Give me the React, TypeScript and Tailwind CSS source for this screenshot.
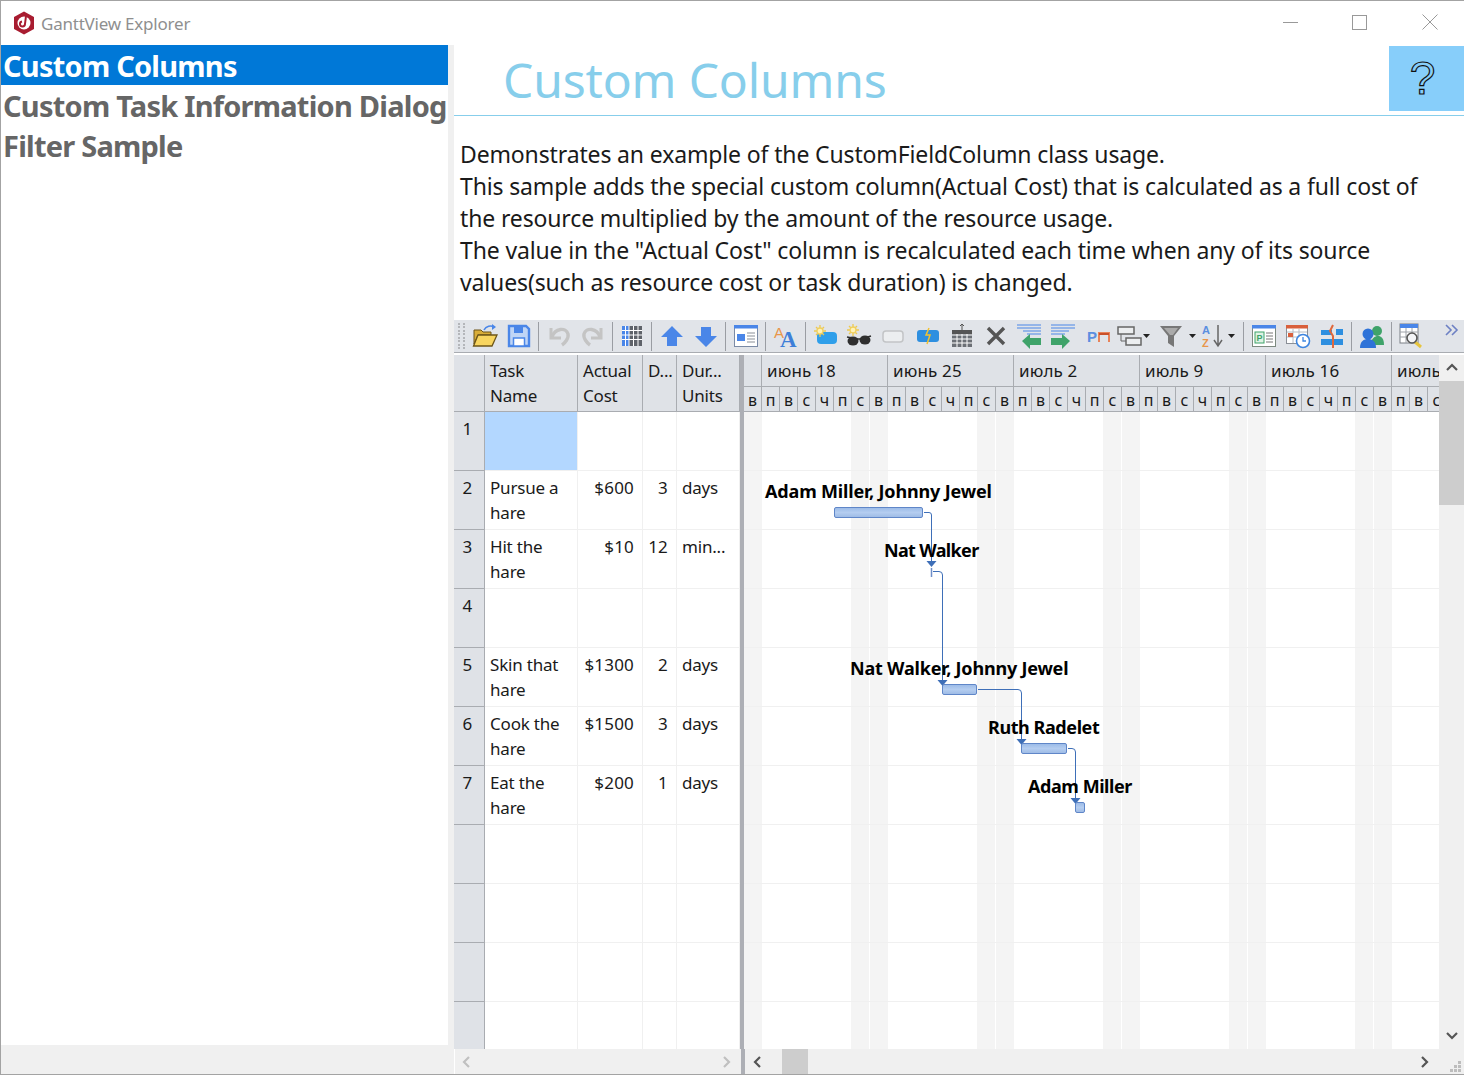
import React from "react";

const Svg = ({ children, w = 26 }: { children: React.ReactNode; w?: number }) => (
  <svg width={w} height={26} viewBox={`0 0 ${w} 26`} className="block shrink-0">{children}</svg>
);
const Btn = ({ children }: { children: React.ReactNode }) => (
  <div className="flex w-[34px] shrink-0 items-center justify-center">{children}</div>
);
const Sep = () => <div className="h-[29px] w-px shrink-0 bg-[#9a9da3]" />;
const Drop = () => (
  <svg width={8} height={5} viewBox="0 0 8 5" className="block shrink-0"><path d="M0 0h7L3.500 4z" fill="#222" /></svg>
);
const Sun = ({ x = 8, y = 8 }: { x?: number; y?: number }) => (
  <g stroke="#eec950" strokeWidth={1.3}>
    <path d={`M${x - 6} ${y}h12M${x} ${y - 6}v12M${x - 4} ${y - 4}l8 8M${x - 4} ${y + 4}l8-8`} />
    <circle cx={x} cy={y} r={3} fill="#fff3b8" stroke="#f0cf60" />
  </g>
);

const Toolbar = () => (
  <div className="flex h-[32px] items-center bg-[#e1e4e9]">
    <div className="ml-1 grid h-[26px] w-[8px] shrink-0 grid-cols-2 content-between gap-x-[2px]">
      {Array.from({ length: 16 }).map((_, i) => (
        <div key={i} className="h-[2px] w-[2px] bg-[#b4b6ba]" />
      ))}
    </div>
    <div className="flex w-[72px] shrink-0 justify-end pr-[2px]">
      <Btn>
        <Svg>
          <path d="M2 7h7l2 2h8v3H6L2 21z" fill="#d9ad38" stroke="#6d5518" />
          <path d="M6 12h19l-5 11H1.500z" fill="#f8d55f" stroke="#6d5518" strokeWidth={1.3} />
          <path d="M12 7c2-4 7-5 10-3" fill="none" stroke="#4a86e8" strokeWidth={1.6} />
          <path d="M20 1l4 3-4 3z" fill="#4a86e8" />
        </Svg>
      </Btn>
      <Btn>
        <Svg>
          <path d="M3 3h17l3 3v17H3z" fill="#bfd5f6" stroke="#4a86e8" strokeWidth={2.4} />
          <rect x="8" y="3" width="9" height="7" fill="#4a86e8" />
          <rect x="7.500" y="15" width="11" height="8" fill="#fff" stroke="#4a86e8" strokeWidth={1.5} />
        </Svg>
      </Btn>
    </div>
    <Sep />
    <div className="flex w-[73px] shrink-0 justify-center">
      <Btn>
        <Svg>
          <path d="M5 5v10h10" fill="none" stroke="#c4c4c4" strokeWidth={3} />
          <path d="M6 14C9 5 20 4 22 11c1 4-3 9-6 11" fill="none" stroke="#c4c4c4" strokeWidth={3.4} />
        </Svg>
      </Btn>
      <Btn>
        <Svg>
          <path d="M21 5v10H11" fill="none" stroke="#c4c4c4" strokeWidth={3} />
          <path d="M20 14C17 5 6 4 4 11c-1 4 3 9 6 11" fill="none" stroke="#c4c4c4" strokeWidth={3.4} />
        </Svg>
      </Btn>
    </div>
    <Sep />
    <div className="flex w-[38px] shrink-0 justify-center">
      <Svg>
        <rect x="3" y="3" width="20" height="20" fill="#5f636a" />
        <rect x="3" y="3" width="7" height="20" fill="#4a86e8" />
        <path d="M3 7.500h20M3 12h20M3 16.500h20M6.500 3v20M10 3v20M14.500 3v20M19 3v20" stroke="#fff" strokeWidth={1} />
      </Svg>
    </div>
    <Sep />
    <div className="flex w-[73px] shrink-0 justify-center">
      <Btn>
        <Svg><path d="M2 14L13 3l11 11h-6v9H8v-9z" fill="#4a86e8" /></Svg>
      </Btn>
      <Btn>
        <Svg><path d="M2 13L13 24l11-11h-6V4H8v9z" fill="#4a86e8" /></Svg>
      </Btn>
    </div>
    <Sep />
    <div className="flex w-[39px] shrink-0 justify-center">
      <Svg>
        <rect x="1.500" y="3.500" width="23" height="20" fill="#fff" stroke="#7a8aa5" />
        <rect x="1" y="2" width="24" height="3.500" fill="#4a86e8" />
        <rect x="4" y="11" width="8" height="7" fill="#4a86e8" />
        <path d="M14 10h8M14 13h8M14 16h8M14 19h8" stroke="#8a8f97" />
      </Svg>
    </div>
    <Sep />
    <div className="flex w-[39px] shrink-0 justify-center">
      <Svg>
        <text x="1" y="15" fontSize="15" fill="#e8964a" fontFamily="Liberation Sans, sans-serif">A</text>
        <text x="7" y="24" fontSize="23" fontWeight="700" fill="#3e7fd8" fontFamily="Liberation Serif, serif">A</text>
      </Svg>
    </div>
    <Sep />
    <div className="flex w-[437px] shrink-0 pl-[2px]">
      <Btn>
        <Svg>
          <rect x="5" y="9" width="20" height="12" rx="4" fill="#2f9fea" />
          <Sun x={8} y={8} />
        </Svg>
      </Btn>
      <Btn>
        <Svg>
          <Sun x={7} y={7} />
          <path d="M1 14l11 2h3l10-3" fill="none" stroke="#2f2f2f" strokeWidth={1.6} />
          <ellipse cx="7" cy="18" rx="5.500" ry="4.500" fill="#2f2f2f" />
          <ellipse cx="19" cy="17" rx="5.500" ry="4.500" fill="#2f2f2f" />
        </Svg>
      </Btn>
      <Btn>
        <Svg><rect x="3" y="8" width="20" height="11" rx="3" fill="#eceef0" stroke="#c2c4c6" strokeWidth={1.5} /></Svg>
      </Btn>
      <Btn>
        <Svg>
          <rect x="3" y="7" width="22" height="12" rx="3" fill="#2e8fe0" />
          <path d="M15 5l-3 7h4l-3 9" fill="none" stroke="#f2c230" strokeWidth={1.5} />
        </Svg>
      </Btn>
      <Btn>
        <Svg>
          <rect x="4" y="7" width="20" height="17" fill="#6c7076" />
          <path d="M4 12h20M4 16h20M4 20h20M9 7v17M14 7v17M19 7v17" stroke="#fff" />
          <rect x="4" y="7" width="20" height="4" fill="#555" />
          <path d="M14 7V1M12 3l2-2 2 2" fill="none" stroke="#555" />
        </Svg>
      </Btn>
      <Btn>
        <Svg><path d="M6 5l16 16M22 5L6 21" stroke="#555" strokeWidth={3.4} /></Svg>
      </Btn>
      <Btn>
        <Svg>
          <path d="M1 2h24M1 5h24M7 8h18M11 11h14" stroke="#4a86e8" strokeWidth={1.2} />
          <path d="M6 18l8-7v4h11v7H14v4z" fill="#3fa36a" />
        </Svg>
      </Btn>
      <Btn>
        <Svg>
          <path d="M1 2h24M1 5h24M1 8h18M1 11h14" stroke="#4a86e8" strokeWidth={1.2} />
          <path d="M20 18l-8-7v4H1v7h11v4z" fill="#3fa36a" />
        </Svg>
      </Btn>
      <Btn>
        <Svg>
          <text x="3" y="19" fontSize="15" fontWeight="700" fill="#5b8fe0" fontFamily="Liberation Sans, sans-serif">P</text>
          <path d="M15 19v-9h10v9" fill="none" stroke="#e8835a" strokeWidth={2} />
          <path d="M15 11h10" stroke="#c9502a" strokeWidth={2} />
        </Svg>
      </Btn>
      <div className="flex w-[41px] shrink-0 items-center pl-[3px]">
        <Svg w={25}>
          <rect x="1" y="4" width="16" height="7" fill="#eceef0" stroke="#666" strokeWidth={1.5} />
          <rect x="9" y="15" width="15" height="7" fill="#eceef0" stroke="#666" strokeWidth={1.5} />
          <path d="M4 11v7h5" fill="none" stroke="#666" />
        </Svg>
        <div className="ml-[1px]"><Drop /></div>
      </div>
      <div className="flex w-[41px] shrink-0 items-center pl-[4px]">
        <Svg w={24}>
          <path d="M1 3h22l-8 10v11l-6-4v-7z" fill="#777" />
          <path d="M5 5h14l-5 7h-3z" fill="#aaa" />
        </Svg>
        <div className="ml-[6px]"><Drop /></div>
      </div>
      <div className="flex w-[43px] shrink-0 items-center pl-[5px]">
        <Svg w={24}>
          <text x="1" y="11" fontSize="11" fontWeight="700" fill="#5b8fe0" fontFamily="Liberation Sans, sans-serif">A</text>
          <text x="1" y="24" fontSize="11" fontWeight="700" fill="#e8964a" fontFamily="Liberation Sans, sans-serif">Z</text>
          <path d="M17 2v20M13 17l4 6 4-6" fill="none" stroke="#666" strokeWidth={1.5} />
        </Svg>
        <div className="ml-[3px]"><Drop /></div>
      </div>
    </div>
    <Sep />
    <div className="flex w-[107px] shrink-0 justify-center">
      <Btn>
        <Svg>
          <rect x="1.500" y="3.500" width="23" height="20" fill="#fff" stroke="#7d8a80" />
          <rect x="1" y="2" width="24" height="3.500" fill="#4a86e8" />
          <rect x="4" y="9" width="9" height="11" fill="#dff2e4" stroke="#3fa36a" />
          <text x="5.500" y="18" fontSize="9" fontWeight="700" fill="#3fa36a" fontFamily="Liberation Sans, sans-serif">P</text>
          <path d="M15 10h7M15 13h7M15 16h7M15 19h7" stroke="#777" />
        </Svg>
      </Btn>
      <Btn>
        <Svg>
          <rect x="1.500" y="3.500" width="21" height="17" fill="#fff" stroke="#8a8f97" />
          <rect x="1" y="2" width="22" height="3.500" fill="#d9603c" />
          <path d="M2 9h20M2 14h20M8 6v14M14 6v14" stroke="#b8bcc2" />
          <rect x="3" y="10" width="5" height="4" fill="#d9603c" />
          <circle cx="18" cy="18" r="6.500" fill="#fff" stroke="#3e86e0" strokeWidth={1.6} />
          <path d="M18 14v4h3" fill="none" stroke="#3e86e0" strokeWidth={1.3} />
        </Svg>
      </Btn>
      <Btn>
        <Svg>
          <rect x="2" y="7" width="11" height="5" fill="#2e8fe0" />
          <rect x="2" y="16" width="22" height="6" fill="#2e8fe0" />
          <rect x="17" y="6" width="7" height="6" fill="#2e8fe0" />
          <path d="M14 2l-3 6 3 5v12" fill="none" stroke="#e0683c" strokeWidth={2} />
        </Svg>
      </Btn>
    </div>
    <Sep />
    <div className="flex w-[39px] shrink-0 justify-center">
      <Svg>
        <circle cx="18" cy="8" r="5" fill="#3fa36a" />
        <path d="M12 22c0-7 4-9 7-9s6 2 6 9z" fill="#3fa36a" />
        <circle cx="9" cy="11" r="5.500" fill="#2f73d8" />
        <path d="M1 25c0-7 4-9 8-9s8 2 8 9z" fill="#2f73d8" />
      </Svg>
    </div>
    <Sep />
    <div className="flex w-[38px] shrink-0 justify-center">
      <Svg>
        <rect x="2" y="1" width="18" height="19" fill="#fff" stroke="#7a7e85" />
        <rect x="2" y="1" width="18" height="4" fill="#4a86e8" />
        <path d="M2 9h18M2 14h18M8 5v15M14 5v15" stroke="#9ea2a8" />
        <path d="M17 19l6 5" stroke="#e6c43e" strokeWidth={3} />
        <circle cx="14" cy="15" r="5" fill="#f4f5f7" stroke="#555" strokeWidth={1.6} />
      </Svg>
    </div>
    <div className="flex flex-1 justify-end pr-[5px] pb-[12px]">
      <svg width={14} height={12} viewBox="0 0 14 12" className="block">
        <path d="M1 1l5 5-5 5M7 1l5 5-5 5" fill="none" stroke="#6d80c4" strokeWidth={1.6} />
      </svg>
    </div>
  </div>
);

const rows = [
  { n: "1", sel: true, task: ["", ""], cost: "", d: "", u: "" },
  { n: "2", task: ["Pursue a", "hare"], cost: "$600", d: "3", u: "days" },
  { n: "3", task: ["Hit the", "hare"], cost: "$10", d: "12", u: "min..." },
  { n: "4", task: ["", ""], cost: "", d: "", u: "" },
  { n: "5", task: ["Skin that", "hare"], cost: "$1300", d: "2", u: "days" },
  { n: "6", task: ["Cook the", "hare"], cost: "$1500", d: "3", u: "days" },
  { n: "7", task: ["Eat the", "hare"], cost: "$200", d: "1", u: "days" },
  { n: "", task: ["", ""], cost: "", d: "", u: "" },
  { n: "", task: ["", ""], cost: "", d: "", u: "" },
  { n: "", task: ["", ""], cost: "", d: "", u: "" },
] as { n: string; sel?: boolean; task: string[]; cost: string; d: string; u: string }[];

const headCell = "border-r border-b border-[#a9acb1] bg-[#dfe2e7] pl-[5px] pt-[3px] leading-[25px] whitespace-nowrap overflow-hidden";
const cell = "h-[59px] border-r border-b border-[#f0f0f0] pt-[4px] leading-[25px] whitespace-nowrap overflow-hidden";

const Table = () => (
  <div className="w-[286px] shrink-0 overflow-hidden text-[17px] tracking-[-0.2px] text-[#1a1a1a]">
    <div className="grid h-[57px] grid-cols-[31px_93px_65px_34px_63px]">
      <div className={headCell} />
      <div className={headCell}>Task<br />Name</div>
      <div className={headCell}>Actual<br />Cost</div>
      <div className={headCell}>D...</div>
      <div className={headCell}>Dur...<br />Units</div>
    </div>
    {rows.map((r, i) => (
      <div key={i} className="grid grid-cols-[31px_93px_65px_34px_63px]">
        <div className="h-[59px] border-r border-b border-[#a9acb1] bg-[#dfe2e7] pr-[12px] pt-[4px] text-right leading-[25px]">{r.n}</div>
        <div className={`${cell} pl-[5px] ${r.sel ? "bg-[#b3d7ff]" : ""}`}>{r.task[0]}<br />{r.task[1]}</div>
        <div className={`${cell} pr-[8px] text-right tracking-[0.2px]`}>{r.cost}</div>
        <div className={`${cell} pr-[8px] text-right tracking-[0.2px]`}>{r.d}</div>
        <div className={`${cell} pl-[5px]`}>{r.u}</div>
      </div>
    ))}
    <div className="grid h-[47px] grid-cols-[31px_93px_65px_34px_63px]">
      <div className="border-r border-[#a9acb1] bg-[#dfe2e7]" />
      <div className="border-r border-[#f0f0f0]" />
      <div className="border-r border-[#f0f0f0]" />
      <div className="border-r border-[#f0f0f0]" />
      <div className="border-r border-[#f0f0f0]" />
    </div>
  </div>
);

const weeks = ["июнь 18", "июнь 25", "июль 2", "июль 9", "июль 16", "июль 23"];
const days = ["п", "в", "с", "ч", "п", "с", "в"];

const Bar = ({ className }: { className: string }) => (
  <div className={`absolute h-[11px] rounded-[2px] border border-[#5f86c8] bg-gradient-to-b from-[#9dbce8] via-[#b4cdf0] to-[#9fbce6] ${className}`} />
);
const labelCls = "absolute whitespace-nowrap text-[18px] font-bold leading-[24px] text-black";

const Chart = () => (
  <div className="relative w-[695px] shrink-0 overflow-hidden">
    <div className="h-[57px] overflow-hidden border-b border-[#a9acb1] bg-[#dfe2e7] text-[#1a1a1a]">
      <div className="flex h-[32px] border-b border-[#a9acb1] pl-[17px] text-[17px] tracking-[0.15px]">
        {weeks.map((w) => (
          <div key={w} className="w-[126px] shrink-0 whitespace-nowrap border-l border-[#a9acb1] pl-[5px] pt-[2px] leading-[28px]">{w}</div>
        ))}
      </div>
      <div className="flex h-[24px] text-[16px] leading-[26px]">
        <div className="w-[18px] shrink-0 border-r border-[#a9acb1] text-center">в</div>
        {[0, 1, 2, 3, 4, 5].flatMap((k) =>
          days.map((d, i) => (
            <div key={`${k}${i}`} className="w-[18px] shrink-0 border-r border-[#a9acb1] text-center">{d}</div>
          )),
        )}
      </div>
    </div>
    <div className="relative h-[637px] bg-white">
      <div className="absolute inset-0 flex">
        <div className="h-full w-[18px] shrink-0 bg-[#f4f4f4]" />
        {[0, 1, 2, 3, 4, 5].map((k) => (
          <div key={k} className="flex h-full w-[126px] shrink-0">
            <div className="w-[89px]" />
            <div className="w-[18px] bg-[#f4f4f4]" />
            <div className="w-px" />
            <div className="w-[18px] bg-[#f4f4f4]" />
          </div>
        ))}
      </div>
      <div className="absolute inset-0">
        {Array.from({ length: 10 }).map((_, i) => (
          <div key={i} className="h-[59px] border-b border-[#f0f0f0]" />
        ))}
      </div>
      <svg width={694} height={637} className="absolute left-0 top-0" fill="none" stroke="#3e6fb8">
        <path d="M180 100.500h5q2.500 0 2.500 2.500v48" />
        <path d="M182.500 149h10l-5 6z" fill="#3e6fb8" stroke="none" />
        <path d="M187.500 156v9" stroke="#6f8fc9" strokeWidth={1.5} />
        <path d="M189 159.500h6q3.500 0 3.500 3.500v105" />
        <path d="M193.500 268h10l-5 6z" fill="#3e6fb8" stroke="none" />
        <path d="M234 277.500h40q3.500 0 3.500 3.500v47" />
        <path d="M272.500 327h10l-5 6z" fill="#3e6fb8" stroke="none" />
        <path d="M324 336.500h4q3.500 0 3.500 3.500v47" />
        <path d="M326.500 386h10l-5 6z" fill="#3e6fb8" stroke="none" />
      </svg>
      <Bar className="left-[90px] top-[95px] w-[89px]" />
      <Bar className="left-[198px] top-[272px] w-[35px]" />
      <Bar className="left-[277px] top-[331px] w-[46px]" />
      <Bar className="left-[331px] top-[390px] w-[10px]" />
      <div className={`${labelCls} left-[21px] top-[67px] tracking-[-0.16px]`}>Adam Miller, Johnny Jewel</div>
      <div className={`${labelCls} left-[140px] top-[126px] tracking-[-0.65px]`}>Nat Walker</div>
      <div className={`${labelCls} left-[106px] top-[244px] tracking-[-0.2px]`}>Nat Walker, Johnny Jewel</div>
      <div className={`${labelCls} left-[244px] top-[303px] tracking-[-0.42px]`}>Ruth Radelet</div>
      <div className={`${labelCls} left-[284px] top-[362px] tracking-[-0.44px]`}>Adam Miller</div>
    </div>
  </div>
);

const Chev = ({ dir, color }: { dir: "l" | "r" | "u" | "d"; color: string }) => {
  const d =
    dir === "l" ? "M8 1L3 6l5 5" : dir === "r" ? "M4 1l5 5-5 5" : dir === "u" ? "M1 8l5-5 5 5" : "M1 4l5 5 5-5";
  return (
    <svg width={12} height={12} viewBox="0 0 12 12" className="block shrink-0">
      <path d={d} fill="none" stroke={color} strokeWidth={2.2} />
    </svg>
  );
};

export default function App() {
  return (
    <div className="relative flex h-[1075px] w-[1464px] flex-col overflow-hidden border-y border-l border-[#a3a3a3] bg-white font-['Noto_Sans',sans-serif]">
      <div className="flex h-[44px] shrink-0 items-center">
        <svg width={24} height={24} viewBox="0 0 24 24" className="ml-[11px] block shrink-0">
          <path d="M12 0.500l10 5.500v12l-10 5.500L2 18V6z" fill="#a81c30" />
          <circle cx="12" cy="12" r="6.500" fill="#fff" />
          <path d="M14 5l-1 8a2.500 2.500 0 1 1-3-2.500" fill="none" stroke="#a81c30" strokeWidth={2} />
        </svg>
        <div className="ml-[5px] mt-[1px] text-[17px] tracking-[-0.22px] text-[#8f8f8f]">GanttView Explorer</div>
        <div className="ml-auto mb-[2px] flex h-[15px] items-center">
          <div className="h-px w-[15px] bg-[#999]" />
          <div className="ml-[54px] h-[15px] w-[15px] border border-[#999]" />
          <svg width={16} height={16} viewBox="0 0 16 16" className="ml-[55px] mr-[26px] block">
            <path d="M0.500 0.500l15 15M15.500 0.500l-15 15" stroke="#999" />
          </svg>
        </div>
      </div>
      <div className="flex min-h-0 flex-1">
        <div className="flex w-[453px] shrink-0 flex-col bg-[#f0f0f0]">
          <div className="mr-[6px] flex-1 bg-white text-[29px] font-bold leading-[42px] tracking-[-0.77px] text-[#666]">
            <div className="h-[40px] whitespace-nowrap bg-[#0078d7] pl-[2px] text-white">Custom Columns</div>
            <div className="h-[40px] whitespace-nowrap pl-[2px]">Custom Task Information Dialog</div>
            <div className="h-[40px] whitespace-nowrap pl-[2px]">Filter Sample</div>
          </div>
          <div className="h-[29px] shrink-0" />
        </div>
        <div className="flex min-w-0 flex-1 flex-col">
          <div className="flex h-[71px] shrink-0 items-start justify-between border-b border-[#87ceeb]">
            <div className="pl-[49px] pt-[3px] text-[48px] leading-[64px] tracking-[-0.15px] text-[#87ceeb]">Custom Columns</div>
            <div className="mt-px flex h-[65px] w-[75px] items-center justify-center bg-[#87cefa] pr-[8px] font-['Liberation_Sans',sans-serif] text-[46px] text-transparent [-webkit-text-stroke:1.2px_#111]">?</div>
          </div>
          <div className="h-[204px] shrink-0 whitespace-nowrap pl-[6px] pt-[22px] text-[23px] leading-[32px] tracking-[-0.14px] text-[#1a1a1a]">
            <div>Demonstrates an example of the CustomFieldColumn class usage.</div>
            <div>This sample adds the special custom column(Actual Cost) that is calculated as a full cost of</div>
            <div>the resource multiplied by the amount of the resource usage.</div>
            <div>The value in the "Actual Cost" column is recalculated each time when any of its source</div>
            <div>values(such as resource cost or task duration) is changed.</div>
          </div>
          <Toolbar />
          <div className="h-[3px] shrink-0 border-t border-[#a9acb1] bg-white" />
          <div className="flex min-h-0 flex-1">
            <div className="flex min-w-0 flex-1 flex-col">
              <div className="flex h-[694px] shrink-0">
                <Table />
                <div className="w-[4px] shrink-0 bg-[#adafb5]" />
                <Chart />
              </div>
            </div>
            <div className="flex h-[694px] w-[25px] shrink-0 flex-col items-center bg-[#f0f0f0]">
              <div className="flex h-[26px] shrink-0 items-center justify-center"><Chev dir="u" color="#555" /></div>
              <div className="h-[124px] w-full shrink-0 bg-[#cdcdcd]" />
              <div className="flex-1" />
              <div className="flex h-[28px] shrink-0 items-center justify-center"><Chev dir="d" color="#555" /></div>
            </div>
          </div>
          <div className="absolute bottom-0 left-[454px] right-0 flex h-[25px] items-center bg-[#f0f0f0]">
            <div className="flex w-[286px] shrink-0 items-center justify-between pl-[6px] pr-[9px]">
              <Chev dir="l" color="#c0c0c0" />
              <Chev dir="r" color="#c0c0c0" />
            </div>
            <div className="h-full w-[4px] shrink-0 bg-[#adafb5]" />
            <div className="ml-[7px]"><Chev dir="l" color="#555" /></div>
            <div className="ml-[18px] h-full w-[26px] shrink-0 bg-[#cdcdcd]" />
            <div className="ml-auto mr-[34px]"><Chev dir="r" color="#555" /></div>
            <svg width={12} height={12} viewBox="0 0 12 12" className="absolute bottom-[1px] right-[2px] block" fill="#bdbdbd">
              <rect x="8" y="0" width="3" height="3" />
              <rect x="4" y="4" width="3" height="3" />
              <rect x="8" y="4" width="3" height="3" />
              <rect x="0" y="8" width="3" height="3" />
              <rect x="4" y="8" width="3" height="3" />
              <rect x="8" y="8" width="3" height="3" />
            </svg>
          </div>
        </div>
      </div>
    </div>
  );
}
